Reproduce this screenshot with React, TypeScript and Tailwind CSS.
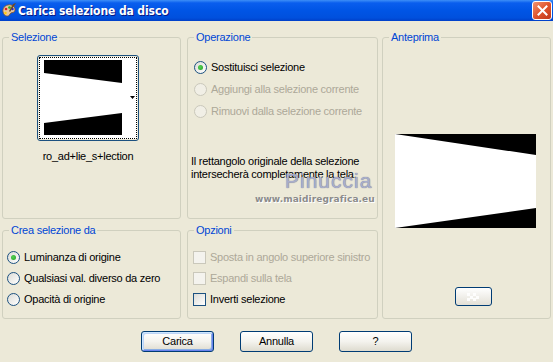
import React from 'react';

// group box with the label sitting on the top border
const Group = ({ label, className, children }: { label: string; className: string; children?: React.ReactNode }) => (
  <div className={`relative border border-[#D0D0BF] rounded-[3px] ${className}`}>
    <span className="absolute -top-[7px] left-[6px] px-[2px] bg-[#ECE9D8] text-[#0046D5] leading-[13px]">{label}</span>
    {children}
  </div>
);

const Radio = ({ checked, disabled }: { checked?: boolean; disabled?: boolean }) => (
  <span
    className={`w-[13px] h-[13px] rounded-full border flex items-center justify-center shrink-0 ${
      disabled ? 'border-[#CAC8BB] bg-[#F1EFE6]' : 'border-[#1C5180] bg-linear-to-br from-[#DCDCD7] to-white'
    }`}
  >
    {checked && <span className="w-[5px] h-[5px] rounded-full bg-[radial-gradient(circle_at_40%_40%,#55D155,#21A121)]" />}
  </span>
);

const Check = ({ disabled }: { disabled?: boolean }) => (
  <span
    className={`w-[13px] h-[13px] border shrink-0 ${
      disabled ? 'border-[#CAC8BB] bg-[#F4F3EE]' : 'border-[#1C5180] bg-linear-to-br from-[#DCDCD7] to-white'
    }`}
  />
);

const Button = ({ label, main }: { label: string; main?: boolean }) => (
  <button
    className={`w-[73px] h-[21px] rounded-[3px] border border-[#003C74] bg-linear-to-b from-white via-[#F4F3EE] to-[#DEDBCF] text-black leading-none ${
      main ? 'shadow-[inset_1px_1px_0_#CEE7FF,inset_-1px_-1px_0_#6982EE,inset_2px_2px_0_#BCD4F6,inset_-2px_-2px_0_#89ADE4]' : ''
    }`}
  >
    {label}
  </button>
);

export default function App() {
  return (
    <div className="relative w-[553px] h-[362px] overflow-hidden bg-[#ECE9D8] text-[11px] tracking-[-0.25px] text-black font-['Liberation_Sans',Arial,sans-serif] whitespace-nowrap">
      {/* title bar */}
      <div className="h-[21px] flex items-center bg-[linear-gradient(180deg,#3D8FF7_0%,#0A5EEE_14%,#0055E5_50%,#0050DD_85%,#003FC8_100%)]">
        <svg className="ml-[1px] w-[16px] h-[16px]" viewBox="0 0 16 16">
          <path d="M2 9 C1 4 6 1 10 2 C14 3 15 7 13 9 C12 10 10 9 9 11 C8 14 3 14 2 9 Z" fill="#E8C89A" stroke="#7A5230" strokeWidth="0.8" />
          <circle cx="5" cy="6" r="1.3" fill="#D22" />
          <circle cx="8.5" cy="4.5" r="1.3" fill="#2A2" />
          <circle cx="11.5" cy="6" r="1.2" fill="#22D" />
          <circle cx="4.5" cy="10" r="1.2" fill="#FC0" />
          <path d="M12 1 L15 0 L9 9 L8 8 Z" fill="#6B4A2A" />
        </svg>
        <span className="ml-[1px] text-white font-bold text-[12px] tracking-[-0.1px] [text-shadow:1px_1px_0_#0A1883] font-['DejaVu_Sans_Condensed','Liberation_Sans',sans-serif]">
          Carica selezione da disco
        </span>
        <div className="ml-auto mr-[1px] w-[20px] h-[19px] rounded-[3px] border border-white bg-linear-to-br from-[#F0926F] via-[#E0542C] to-[#C0381A] flex items-center justify-center">
          <svg width="11" height="11" viewBox="0 0 11 11">
            <path d="M1.5 1.5 L9.5 9.5 M9.5 1.5 L1.5 9.5" stroke="white" strokeWidth="2" strokeLinecap="square" />
          </svg>
        </div>
      </div>

      <div className="flex gap-[4px] pl-[2px] mt-[16px]">
        <div className="flex flex-col gap-[11px]">
          <div className="flex gap-[6px]">
            <Group label="Selezione" className="w-[179px] h-[182px]">
              <div className="pt-[17px] pl-[34px] flex flex-col items-center w-[136px]">
                <div className="w-[102px] h-[86px] rounded-[3px] border border-[#1C5180] p-[1px]">
                  <div className="relative w-full h-full border border-dotted border-black bg-white">
                    <svg className="absolute left-[4px] top-[2px]" width="78" height="75" viewBox="0 0 78 75">
                      <polygon points="0,0 78,0 78,23 0,13" fill="black" />
                      <polygon points="0,63 78,53 78,75 0,75" fill="black" />
                    </svg>
                    <svg className="absolute right-[1px] top-[38px]" width="5" height="3" viewBox="0 0 5 3">
                      <polygon points="0,0 5,0 2.5,3" fill="black" />
                    </svg>
                  </div>
                </div>
                <div className="mt-[9px] leading-[13px]">ro_ad+lie_s+lection</div>
              </div>
            </Group>
            <Group label="Operazione" className="w-[191px] h-[182px]">
              <div className="pt-[18px] pl-[6px] flex flex-col">
                <div className="h-[22px] flex items-center gap-[4px]">
                  <Radio checked />
                  <span>Sostituisci selezione</span>
                </div>
                <div className="h-[22px] flex items-center gap-[4px] text-[#ACA899]">
                  <Radio disabled />
                  <span>Aggiungi alla selezione corrente</span>
                </div>
                <div className="h-[22px] flex items-center gap-[4px] text-[#ACA899]">
                  <Radio disabled />
                  <span>Rimuovi dalla selezione corrente</span>
                </div>
              </div>
              <p className="mt-[33px] pl-[3px] leading-[13px]">
                Il rettangolo originale della selezione
                <br />
                intersecherà completamente la tela.
              </p>
            </Group>
          </div>
          <div className="flex gap-[6px]">
            <Group label="Crea selezione da" className="w-[179px] h-[89px]">
              <div className="pt-[16px] pl-[4px] flex flex-col">
                <div className="h-[21px] flex items-center gap-[4px]">
                  <Radio checked />
                  <span>Luminanza di origine</span>
                </div>
                <div className="h-[21px] flex items-center gap-[4px]">
                  <Radio />
                  <span>Qualsiasi val. diverso da zero</span>
                </div>
                <div className="h-[21px] flex items-center gap-[4px]">
                  <Radio />
                  <span>Opacità di origine</span>
                </div>
              </div>
            </Group>
            <Group label="Opzioni" className="w-[191px] h-[89px]">
              <div className="pt-[16px] pl-[5px] flex flex-col">
                <div className="h-[21px] flex items-center gap-[4px] text-[#ACA899]">
                  <Check disabled />
                  <span>Sposta in angolo superiore sinistro</span>
                </div>
                <div className="h-[21px] flex items-center gap-[4px] text-[#ACA899]">
                  <Check disabled />
                  <span>Espandi sulla tela</span>
                </div>
                <div className="h-[21px] flex items-center gap-[4px]">
                  <Check />
                  <span>Inverti selezione</span>
                </div>
              </div>
            </Group>
          </div>
        </div>
        <Group label="Anteprima" className="w-[169px] h-[282px]">
          <svg className="mt-[96px] ml-[12px] block" width="141" height="94" viewBox="0 0 141 94">
            <rect width="141" height="94" fill="white" />
            <polygon points="0,0 141,0 141,21" fill="black" />
            <polygon points="0,94 141,74 141,94" fill="black" />
          </svg>
          <button className="mt-[59px] ml-[72px] w-[37px] h-[19px] rounded-[3px] border border-[#003C74] bg-linear-to-b from-white to-[#E3E0D6] flex items-center justify-center">
            <svg width="14" height="8" viewBox="0 0 14 8" opacity="0.9">
              <rect x="0" y="0" width="3" height="3" fill="white" />
              <rect x="6" y="0" width="3" height="3" fill="white" />
              <rect x="3" y="3" width="3" height="3" fill="white" />
              <rect x="9" y="3" width="3" height="3" fill="white" />
              <rect x="0" y="5" width="3" height="3" fill="white" />
              <rect x="6" y="5" width="3" height="3" fill="white" />
            </svg>
          </button>
        </Group>
      </div>

      <div className="flex justify-center gap-[26px] mt-[12px]">
        <Button label="Carica" main />
        <Button label="Annulla" />
        <Button label="?" />
      </div>

      {/* watermark */}
      <div className="absolute left-[285px] top-[170px] text-[21px] leading-none text-[#A9AECB] tracking-[1px] [text-shadow:0_0_1px_#5E6488]">
        Pinuccia
      </div>
      <div className="absolute left-[255px] top-[195px] text-[9px] leading-none font-bold text-[#8B8B8B] tracking-[0.1px] [text-shadow:1px_1px_0_#ffffff] font-['DejaVu_Sans',sans-serif]">
        www.maidiregrafica.eu
      </div>
    </div>
  );
}
